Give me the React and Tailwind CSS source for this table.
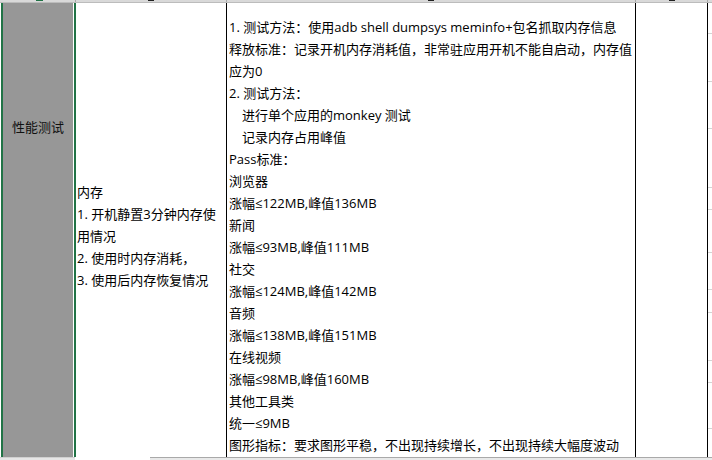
import React from 'react';

const col3Lines = [
  { text: '1. 测试方法：使用adb shell dumpsys meminfo+包名抓取内存信息' },
  { text: '释放标准：记录开机内存消耗值，非常驻应用开机不能自启动，内存值' },
  { text: '应为0' },
  { text: '2. 测试方法：' },
  { text: '进行单个应用的monkey 测试', indent: true },
  { text: '记录内存占用峰值', indent: true },
  { text: 'Pass标准：' },
  { text: '浏览器' },
  { text: '涨幅≤122MB,峰值136MB' },
  { text: '新闻' },
  { text: '涨幅≤93MB,峰值111MB' },
  { text: '社交' },
  { text: '涨幅≤124MB,峰值142MB' },
  { text: '音频' },
  { text: '涨幅≤138MB,峰值151MB' },
  { text: '在线视频' },
  { text: '涨幅≤98MB,峰值160MB' },
  { text: '其他工具类' },
  { text: '统一≤9MB' },
  { text: '图形指标：要求图形平稳，不出现持续增长，不出现持续大幅度波动' }
];

const col2Lines = [
  '内存',
  '1. 开机静置3分钟内存使',
  '用情况',
  '2. 使用时内存消耗，',
  '3. 使用后内存恢复情况'
];

// row boundaries of the next column, peeking in at the right edge
const rightRows = [31, 48, 47, 59, 22, 43, 37, 23, 48, 22, 46];

const App = () => {
  return (
    <div className="w-[712px] h-[460px] overflow-hidden bg-white flex flex-col text-[13px] leading-[22px] text-black font-['Open_Sans','Noto_Sans_CJK_SC',sans-serif]">
      {/* column header strip, cut off */}
      <div className="h-[3px] flex bg-[#d9d9d9] border-b border-[#bcbcbc]">
        <div className="w-[3px]" />
        <div className="w-[73px] flex justify-center border-r border-[#a8a8a8]">
          <div className="w-[7px] h-[1px] bg-[#217346]" />
        </div>
        <div className="w-[151px] flex justify-center border-r border-[#a8a8a8]">
          <div className="w-[6px] h-[1px] bg-[#222]" />
        </div>
        <div className="w-[409px] flex justify-center border-r border-[#a8a8a8]">
          <div className="w-[6px] h-[1px] bg-[#222]" />
        </div>
        <div className="w-[72px] flex justify-center border-r border-[#a8a8a8]">
          <div className="w-[6px] h-[1px] bg-[#222]" />
        </div>
        <div className="flex-1" />
      </div>

      <div className="flex-1 flex min-h-0">
        <div className="w-[1px] bg-white" />
        <div className="w-[2px] bg-[#217346]" />
        <div className="w-[70px] bg-[#979797] pt-[113px] text-center text-[#111]">
          性能测试
        </div>
        <div className="w-[1px] bg-white" />
        <div className="w-[2px] bg-[#217346]" />

        <div className="w-[151px] border-r border-black pt-[178px] pl-[1px]">
          {col2Lines.map((line, i) => (
            <div key={i} className="whitespace-pre">{line}</div>
          ))}
        </div>

        <div className="w-[409px] border-r border-black pt-[13px] pl-[2px]">
          {col3Lines.map((line, i) => (
            <div key={i} className={`whitespace-pre ${line.indent ? 'pl-[13px]' : ''}`}>
              {line.text}
            </div>
          ))}
        </div>

        <div className="w-[72px] border-r border-black" />

        <div className="flex-1 flex flex-col">
          {rightRows.map((h, i) => (
            <div key={i} className="border-b border-[#d4d4d4]" style={{ height: h }} />
          ))}
        </div>
      </div>

      {/* scrollbar / tab strip */}
      <div className="h-[3px] flex">
        <div className="w-[75px] bg-[#e6e6e6] border-t border-[#d0d0d0]" />
        <div className="w-[75px] bg-white" />
        <div className="flex-1 bg-[#e9e9e9] border-t border-[#a9a9a9]" />
      </div>
    </div>
  );
};

export default App;
